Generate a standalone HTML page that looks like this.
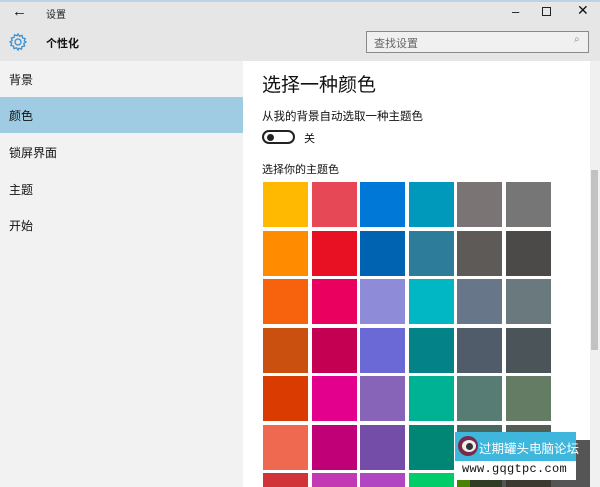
<!DOCTYPE html>
<html><head><meta charset="utf-8"><style>
*{margin:0;padding:0;box-sizing:border-box}
html{width:600px;height:487px;overflow:hidden}
body{width:600px;height:487px;overflow:hidden;background:#e6e6e6;font-family:"Liberation Sans","Noto Sans CJK SC",sans-serif;position:relative;color:#111}
.a{position:absolute}
.side{left:0;top:61px;width:243px;height:426px;background:#f2f2f2}
.item{position:absolute;left:9px;font-size:12px}
.main{left:243px;top:61px;width:357px;height:426px;background:#fff}
.sw{position:absolute;width:45px;height:45px}
</style></head><body>
<div class="a" style="left:0;top:0;width:600px;height:2px;background:#bcd3e6"></div>
<div class="a" style="left:12px;top:3px;font-size:15px">&#8592;</div>
<div class="a" style="left:46px;top:6px;font-size:10px;color:#222">设置</div>
<div class="a" style="left:512px;top:4px;font-size:13px">&#8211;</div>
<div class="a" style="left:542px;top:7px;width:9px;height:9px;border:1px solid #222"></div>
<div class="a" style="left:577px;top:2px;font-size:14px">&#10005;</div>
<svg class="a" style="left:8px;top:32px" width="20" height="20" viewBox="0 0 20 20"><path d="M10 2l1.5 2.2 2.5-.8.5 2.6 2.6.5-.8 2.5L18 10l-2.2 1.5.8 2.5-2.6.5-.5 2.6-2.5-.8L10 18l-1.5-2.2-2.5.8-.5-2.6-2.6-.5.8-2.5L2 10l2.2-1.5-.8-2.5 2.6-.5.5-2.6 2.5.8z" fill="none" stroke="#3a8fd0" stroke-width="1.3"/><circle cx="10" cy="10" r="3" fill="none" stroke="#3a8fd0" stroke-width="1.3"/></svg>
<div class="a" style="left:46px;top:35px;font-size:11px;font-weight:bold">个性化</div>
<div class="a" style="left:366px;top:31px;width:223px;height:22px;border:1px solid #8a8a8a;background:#f0f0f0"></div>
<div class="a" style="left:374px;top:35px;font-size:11px;color:#666">查找设置</div>
<div class="a" style="left:574px;top:34px;font-size:10px;color:#888">&#8981;</div>
<div class="a side">
<div class="item" style="top:10px">背景</div>
<div style="position:absolute;left:0;top:36px;width:243px;height:36px;background:#9fcbe3"></div>
<div class="item" style="top:46px">颜色</div>
<div class="item" style="top:83px">锁屏界面</div>
<div class="item" style="top:120px">主题</div>
<div class="item" style="top:156px">开始</div>
</div>
<div class="a main"></div>
<div class="a" style="left:590px;top:61px;width:10px;height:426px;background:#f0f0f0"></div>
<div class="a" style="left:591px;top:170px;width:7px;height:180px;background:#c2c2c2"></div>
<div class="a" style="left:262px;top:70px;font-size:19px;color:#111">选择一种颜色</div>
<div class="a" style="left:262px;top:108px;font-size:11.5px">从我的背景自动选取一种主题色</div>
<div class="a" style="left:262px;top:130px;width:33px;height:14px;border:2px solid #222;border-radius:8px"></div>
<div class="a" style="left:267px;top:134px;width:7px;height:7px;border-radius:50%;background:#222"></div>
<div class="a" style="left:304px;top:130px;font-size:11px">关</div>
<div class="a" style="left:262px;top:161px;font-size:11px">选择你的主题色</div>
<div id="g"></div>
<script>
var c=[["#ffb900","#e74856","#0078d7","#0099bc","#7a7574","#767676"],
["#ff8c00","#e81123","#0063b1","#2d7d9a","#5d5a58","#4c4a48"],
["#f7630c","#ea005e","#8e8cd8","#00b7c3","#68768a","#69797e"],
["#ca5010","#c30052","#6b69d6","#038387","#515c6b","#4a5459"],
["#da3b01","#e3008c","#8764b8","#00b294","#567c73","#647c64"],
["#ef6950","#bf0077","#744da9","#018574","#486860","#525e54"],
["#d13438","#c239b3","#b146c2","#00cc6a","#498205","#847545"]];
var xs=[263,312,360,409,457,506],h="";
for(var r=0;r<7;r++)for(var i=0;i<6;i++){var t=182+r*48.5;h+='<div class="sw" style="left:'+xs[i]+'px;top:'+t+'px;height:'+Math.min(45,487-t)+'px;background:'+c[r][i]+'"></div>';}
document.getElementById("g").innerHTML=h;
</script>
<div class="a" style="left:470px;top:440px;width:120px;height:47px;background:#2a2a2a;opacity:.8"></div>
<div class="a" style="left:455px;top:432px;width:121px;height:29px;background:#3fb6dc"></div>
<div class="a" style="left:458px;top:436px;width:20px;height:20px;border-radius:50%;background:#7a2a4a"></div>
<div class="a" style="left:462px;top:440px;width:14px;height:12px;border-radius:50%;background:#eee"></div>
<div class="a" style="left:466px;top:443px;width:7px;height:7px;border-radius:50%;background:#333"></div>
<div class="a" style="left:479px;top:438px;font-size:12.5px;color:#fff">过期罐头电脑论坛</div>
<div class="a" style="left:455px;top:461px;width:121px;height:19px;background:#fff"></div>
<div class="a" style="left:462px;top:462px;font-size:12px;color:#111;font-family:'Liberation Mono',monospace;letter-spacing:0.3px">www.gqgtpc.com</div>
</body></html>
